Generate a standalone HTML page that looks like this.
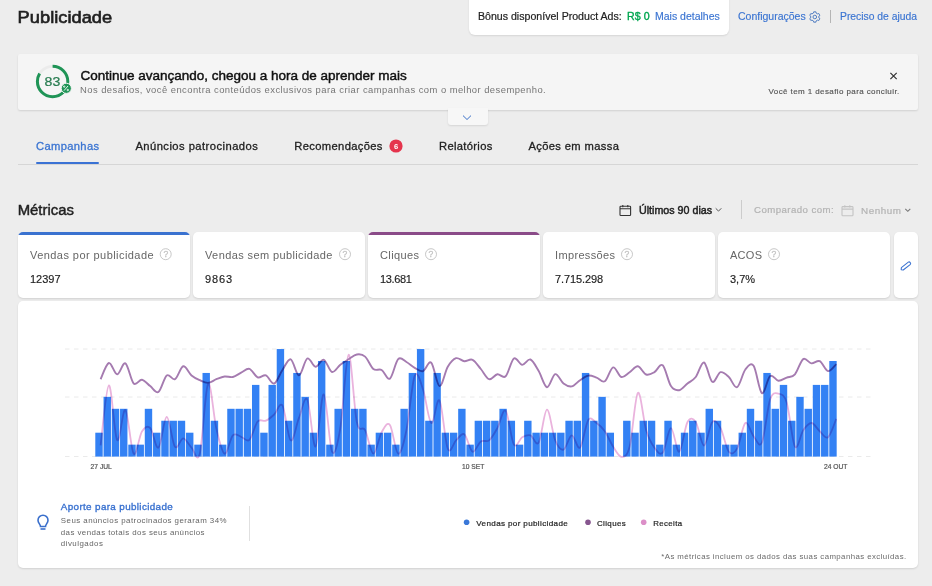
<!DOCTYPE html>
<html><head><meta charset="utf-8">
<style>
*{margin:0;padding:0;box-sizing:border-box}
html,body{width:932px;height:586px;overflow:hidden;background:#ededed;font-family:"Liberation Sans",sans-serif;color:#333}
.a{position:absolute}
.card{position:absolute;top:232px;height:66px;background:#fff;border-radius:5px;box-shadow:0 1px 2px rgba(0,0,0,.12);overflow:hidden}
svg text{font-family:"Liberation Sans",sans-serif}
.sb{stroke:currentColor;stroke-width:0.35px}
</style></head><body>

<!-- boxes -->
<div class="a" style="left:469px;top:-6px;width:260px;height:41px;background:#fff;border-radius:6px;box-shadow:0 1px 2px rgba(0,0,0,.1)"></div>
<div class="a" style="left:18px;top:53.5px;width:900px;height:56.5px;background:#f5f5f5;border-radius:2px;box-shadow:0 1px 2px rgba(0,0,0,.12)"></div>
<div class="a" style="left:448px;top:108px;width:40px;height:17px;background:#f7f7f7;border-radius:0 0 3px 3px;box-shadow:0 1px 2px rgba(0,0,0,.1)"></div>
<div class="a" style="left:36px;top:161.8px;width:63px;height:2.4px;background:#3a72d4;border-radius:1px"></div>
<div class="a" style="left:18px;top:164px;width:900px;height:1px;background:#d6d6d6"></div>
<div class="a" style="left:741px;top:200px;width:1px;height:19px;background:#ccc"></div>
<div class="a" style="left:830px;top:10px;width:1px;height:13px;background:#b5b5b5"></div>

<div class="card" style="left:18px;width:172px"><div style="height:3px;background:#3a72d0"></div></div>
<div class="card" style="left:193px;width:172px"></div>
<div class="card" style="left:368px;width:172px"><div style="height:3px;background:#8a4b88"></div></div>
<div class="card" style="left:543px;width:172px"></div>
<div class="card" style="left:718px;width:172px"></div>
<div class="card" style="left:894px;width:24px"></div>

<div class="a" style="left:18px;top:301px;width:900px;height:267px;background:#fff;border-radius:5px;box-shadow:0 1px 2px rgba(0,0,0,.12)"></div>
<div class="a" style="left:249px;top:506px;width:1px;height:35px;background:#e0e0e0"></div>

<svg class="a" style="left:0;top:0" width="932" height="586" viewBox="0 0 932 586">
<!-- header text -->
<text transform="translate(17.6 23.2) scale(1.13 1)" font-size="16.2" fill="#1f1f1f" stroke="#1f1f1f" stroke-width="0.6">Publicidade</text>
<text x="478" y="20.2" font-size="10.6" fill="#222" stroke="#222" stroke-width="0.2">Bônus disponível Product Ads:</text>
<text x="627" y="20.2" font-size="10.6" fill="#00a650" stroke="#00a650" stroke-width="0.35" letter-spacing="0.1">R$ 0</text>
<text x="655" y="20.2" font-size="10.5" fill="#3a74d2" stroke="#3a74d2" stroke-width="0.15">Mais detalhes</text>
<text x="738" y="20.2" font-size="10.5" fill="#3a74d2" stroke="#3a74d2" stroke-width="0.15">Configurações</text>
<g transform="translate(814.8 17)" fill="none" stroke="#4a78c0" stroke-width="0.95" stroke-linejoin="round">
<circle r="1.8"/>
<path d="M-1.23,-4.02 L-1.10,-5.18 L1.10,-5.18 L1.23,-4.02 L2.86,-3.07 L3.94,-3.55 L5.04,-1.64 L4.09,-0.94 L4.09,0.94 L5.04,1.64 L3.94,3.55 L2.86,3.07 L1.23,4.02 L1.10,5.18 L-1.10,5.18 L-1.23,4.02 L-2.86,3.07 L-3.94,3.55 L-5.04,1.64 L-4.09,0.94 L-4.09,-0.94 L-5.04,-1.64 L-3.94,-3.55 L-2.86,-3.07Z"/>
</g>
<text x="840" y="20.2" font-size="10.35" fill="#3a74d2" stroke="#3a74d2" stroke-width="0.15">Preciso de ajuda</text>

<!-- banner -->
<g>
<circle cx="52.6" cy="81.5" r="15.2" fill="none" stroke="#ebebeb" stroke-width="2.8"/>
<circle cx="52.6" cy="81.5" r="15.2" fill="none" stroke="#1f9456" stroke-width="3" stroke-dasharray="79.5 100" transform="rotate(-90 52.6 81.5)"/>
<text transform="translate(52.4 85.9) scale(1.12 1)" text-anchor="middle" font-size="12.6" fill="#2a7d52" stroke="#2a7d52" stroke-width="0.25">83</text>
<circle cx="66.3" cy="88.3" r="5.1" fill="#1f9456" stroke="#f5f5f5" stroke-width="1"/>
<g stroke="#fff" stroke-width="0.9" fill="none"><path d="M64 90.6L68 86"/><circle cx="64.2" cy="86.6" r="0.7"/><circle cx="67.8" cy="90" r="0.7"/></g>
</g>
<text x="80.4" y="80" font-size="13.5" fill="#111" stroke="#111" stroke-width="0.45">Continue avançando, chegou a hora de aprender mais</text>
<text x="80" y="92.8" font-size="9.42" letter-spacing="0.454" fill="#757575">Nos desafios, você encontra conteúdos exclusivos para criar campanhas com o melhor desempenho.</text>
<path d="M890.4 72.9L896.7 79.2M896.7 72.9L890.4 79.2" stroke="#333" stroke-width="1.2"/>
<text x="768.5" y="93.8" font-size="8.01" letter-spacing="0.403" fill="#555" stroke="#555" stroke-width="0.15">Você tem 1 desafio para concluir.</text>
<path d="M463 115.6L467 119.5L471 115.6" fill="none" stroke="#3a70c8" stroke-width="1"/>

<!-- tabs -->
<g font-size="11.8" fill="#222" stroke="#222" stroke-width="0.3">
<text x="36" y="149.5" fill="#3a74d2" stroke="#3a74d2" font-size="11.2" letter-spacing="0.34">Campanhas</text>
<text x="135.4" y="149.5" font-size="11.2" letter-spacing="0.46">Anúncios patrocinados</text>
<text x="294.3" y="149.5" font-size="11.2" letter-spacing="0.35">Recomendações</text>
<text x="439" y="149.5" font-size="11.2" letter-spacing="0.33">Relatórios</text>
<text x="528.4" y="149.5" font-size="11.2" letter-spacing="0.36">Ações em massa</text>
</g>
<circle cx="396" cy="146" r="6.6" fill="#e5344d"/>
<text x="396" y="148.8" text-anchor="middle" font-size="7.6" fill="#fff" font-weight="bold">6</text>

<!-- metricas header -->
<text x="17.7" y="215" font-size="14.9" fill="#1f1f1f" stroke="#1f1f1f" stroke-width="0.45">Métricas</text>
<g fill="none" stroke="#333" stroke-width="1.1"><rect x="620" y="206.3" width="10.6" height="9.2" rx="0.8"/><path d="M620 208.8H630.6M622.8 205V207.2M627.8 205V207.2"/></g>
<text x="639" y="214" font-size="10.7" fill="#222" stroke="#222" stroke-width="0.45">Últimos 90 dias</text>
<path d="M715.7 208.3L718.5 211.1L721.3 208.3" fill="none" stroke="#555" stroke-width="1"/>
<text x="754" y="213.4" font-size="9.67" letter-spacing="0.433" fill="#b3b3b3" stroke="#b3b3b3" stroke-width="0.2">Comparado com:</text>
<g fill="none" stroke="#c4c4c4" stroke-width="1.1"><rect x="842" y="206.6" width="11" height="9.2" rx="0.8"/><path d="M842 209.1H853M844.8 205.3V207.5M849.8 205.3V207.5"/></g>
<text x="861" y="214" font-size="9.86" letter-spacing="0.567" fill="#b3b3b3" stroke="#b3b3b3" stroke-width="0.2">Nenhum</text>
<path d="M905.3 208.8L907.8 211.3L910.3 208.8" fill="none" stroke="#777" stroke-width="1.1"/>

<!-- cards text -->
<g font-size="11.7" fill="#666">
<text x="30" y="259.3" font-size="11" letter-spacing="0.44">Vendas por publicidade</text>
<text x="205" y="259.3" font-size="11" letter-spacing="0.39">Vendas sem publicidade</text>
<text x="380" y="259.3" font-size="11" letter-spacing="0.38">Cliques</text>
<text x="555" y="259.3" font-size="11" letter-spacing="0.35">Impressões</text>
<text x="730" y="259.3" font-size="11" letter-spacing="0.28">ACOS</text>
</g>
<g fill="none" stroke="#c8c8c8" stroke-width="1">
<circle cx="165.7" cy="254.2" r="5.5"/><circle cx="345" cy="254.2" r="5.5"/><circle cx="431" cy="254.2" r="5.5"/><circle cx="627" cy="254.2" r="5.5"/><circle cx="774" cy="254.2" r="5.5"/>
</g>
<g font-size="8.6" fill="#c4c4c4" stroke="#c4c4c4" stroke-width="0.3" text-anchor="middle">
<text x="166" y="257.3">?</text><text x="345" y="257.3">?</text><text x="431" y="257.3">?</text><text x="627" y="257.3">?</text><text x="774" y="257.3">?</text>
</g>
<g font-size="11" fill="#222" stroke="#222" stroke-width="0.15">
<text x="30" y="283.1">12397</text>
<text x="205" y="283.1" letter-spacing="0.9">9863</text>
<text x="380" y="283.1" letter-spacing="-0.35">13.681</text>
<text x="555" y="283.1" letter-spacing="-0.1">7.715.298</text>
<text x="730" y="283.1">3,7%</text>
</g>
<path d="M-5.6,0 L-4.2,-1.5 L4.6,-1.5 Q5.9,-1.5 5.9,0 Q5.9,1.5 4.6,1.5 L-4.2,1.5 Z" transform="translate(905.6 266.2) rotate(-38)" fill="none" stroke="#3a72d0" stroke-width="1.05" stroke-linejoin="round"/>

<!-- chart -->
<g stroke="#eaeaea" stroke-width="1" stroke-dasharray="4.5 4.5">
<path d="M65 349H871M65 397H871M65 456.5H871"/>
</g>
<g fill="#3381f4">
<rect x="95.30" y="432.70" width="7.4" height="23.90"/>
<rect x="103.55" y="396.85" width="7.4" height="59.75"/>
<rect x="111.79" y="408.80" width="7.4" height="47.80"/>
<rect x="120.04" y="408.80" width="7.4" height="47.80"/>
<rect x="128.29" y="444.65" width="7.4" height="11.95"/>
<rect x="136.53" y="444.65" width="7.4" height="11.95"/>
<rect x="144.78" y="408.80" width="7.4" height="47.80"/>
<rect x="153.03" y="432.70" width="7.4" height="23.90"/>
<rect x="161.28" y="420.75" width="7.4" height="35.85"/>
<rect x="169.52" y="420.75" width="7.4" height="35.85"/>
<rect x="177.77" y="420.75" width="7.4" height="35.85"/>
<rect x="186.02" y="432.70" width="7.4" height="23.90"/>
<rect x="194.26" y="444.65" width="7.4" height="11.95"/>
<rect x="202.51" y="372.95" width="7.4" height="83.65"/>
<rect x="210.76" y="420.75" width="7.4" height="35.85"/>
<rect x="219.00" y="444.65" width="7.4" height="11.95"/>
<rect x="227.25" y="408.80" width="7.4" height="47.80"/>
<rect x="235.50" y="408.80" width="7.4" height="47.80"/>
<rect x="243.75" y="408.80" width="7.4" height="47.80"/>
<rect x="251.99" y="384.90" width="7.4" height="71.70"/>
<rect x="260.24" y="432.70" width="7.4" height="23.90"/>
<rect x="268.49" y="384.90" width="7.4" height="71.70"/>
<rect x="276.73" y="349.05" width="7.4" height="107.55"/>
<rect x="284.98" y="420.75" width="7.4" height="35.85"/>
<rect x="293.23" y="372.95" width="7.4" height="83.65"/>
<rect x="301.48" y="396.85" width="7.4" height="59.75"/>
<rect x="309.72" y="432.70" width="7.4" height="23.90"/>
<rect x="317.97" y="361.00" width="7.4" height="95.60"/>
<rect x="326.22" y="444.65" width="7.4" height="11.95"/>
<rect x="334.46" y="408.80" width="7.4" height="47.80"/>
<rect x="342.71" y="361.00" width="7.4" height="95.60"/>
<rect x="350.96" y="408.80" width="7.4" height="47.80"/>
<rect x="359.20" y="408.80" width="7.4" height="47.80"/>
<rect x="367.45" y="444.65" width="7.4" height="11.95"/>
<rect x="375.70" y="432.70" width="7.4" height="23.90"/>
<rect x="383.94" y="432.70" width="7.4" height="23.90"/>
<rect x="392.19" y="444.65" width="7.4" height="11.95"/>
<rect x="400.44" y="408.80" width="7.4" height="47.80"/>
<rect x="408.69" y="372.95" width="7.4" height="83.65"/>
<rect x="416.93" y="349.05" width="7.4" height="107.55"/>
<rect x="425.18" y="420.75" width="7.4" height="35.85"/>
<rect x="433.43" y="372.95" width="7.4" height="83.65"/>
<rect x="441.67" y="432.70" width="7.4" height="23.90"/>
<rect x="449.92" y="432.70" width="7.4" height="23.90"/>
<rect x="458.17" y="408.80" width="7.4" height="47.80"/>
<rect x="466.42" y="444.65" width="7.4" height="11.95"/>
<rect x="474.66" y="420.75" width="7.4" height="35.85"/>
<rect x="482.91" y="420.75" width="7.4" height="35.85"/>
<rect x="491.16" y="420.75" width="7.4" height="35.85"/>
<rect x="499.40" y="408.80" width="7.4" height="47.80"/>
<rect x="507.65" y="420.75" width="7.4" height="35.85"/>
<rect x="515.90" y="444.65" width="7.4" height="11.95"/>
<rect x="524.14" y="420.75" width="7.4" height="35.85"/>
<rect x="532.39" y="432.70" width="7.4" height="23.90"/>
<rect x="540.64" y="432.70" width="7.4" height="23.90"/>
<rect x="548.88" y="432.70" width="7.4" height="23.90"/>
<rect x="557.13" y="432.70" width="7.4" height="23.90"/>
<rect x="565.38" y="420.75" width="7.4" height="35.85"/>
<rect x="573.63" y="420.75" width="7.4" height="35.85"/>
<rect x="581.87" y="372.95" width="7.4" height="83.65"/>
<rect x="590.12" y="420.75" width="7.4" height="35.85"/>
<rect x="598.37" y="396.85" width="7.4" height="59.75"/>
<rect x="606.61" y="432.70" width="7.4" height="23.90"/>
<rect x="623.11" y="420.75" width="7.4" height="35.85"/>
<rect x="631.35" y="432.70" width="7.4" height="23.90"/>
<rect x="639.60" y="420.75" width="7.4" height="35.85"/>
<rect x="647.85" y="420.75" width="7.4" height="35.85"/>
<rect x="656.10" y="444.65" width="7.4" height="11.95"/>
<rect x="664.34" y="420.75" width="7.4" height="35.85"/>
<rect x="672.59" y="444.65" width="7.4" height="11.95"/>
<rect x="680.84" y="432.70" width="7.4" height="23.90"/>
<rect x="689.08" y="420.75" width="7.4" height="35.85"/>
<rect x="697.33" y="432.70" width="7.4" height="23.90"/>
<rect x="705.58" y="408.80" width="7.4" height="47.80"/>
<rect x="713.82" y="420.75" width="7.4" height="35.85"/>
<rect x="722.07" y="444.65" width="7.4" height="11.95"/>
<rect x="730.32" y="444.65" width="7.4" height="11.95"/>
<rect x="738.57" y="432.70" width="7.4" height="23.90"/>
<rect x="746.81" y="408.80" width="7.4" height="47.80"/>
<rect x="755.06" y="420.75" width="7.4" height="35.85"/>
<rect x="763.31" y="372.95" width="7.4" height="83.65"/>
<rect x="771.55" y="408.80" width="7.4" height="47.80"/>
<rect x="779.80" y="384.90" width="7.4" height="71.70"/>
<rect x="788.05" y="420.75" width="7.4" height="35.85"/>
<rect x="796.29" y="396.85" width="7.4" height="59.75"/>
<rect x="804.54" y="408.80" width="7.4" height="47.80"/>
<rect x="812.79" y="384.90" width="7.4" height="71.70"/>
<rect x="821.04" y="384.90" width="7.4" height="71.70"/>
<rect x="829.28" y="361.00" width="7.4" height="95.60"/>
</g>
<g style="mix-blend-mode:multiply" fill="none" stroke-width="2">
<path d="M100.60,445.30 C101.98,435.32 106.11,386.28 108.87,385.40 C111.62,384.52 114.38,435.90 117.13,440.00 C119.89,444.10 122.64,407.72 125.40,410.00 C128.15,412.28 130.91,450.13 133.66,453.70 C136.42,457.27 139.17,435.68 141.93,431.40 C144.69,427.12 147.44,425.30 150.20,428.00 C152.95,430.70 155.71,449.45 158.46,447.60 C161.22,445.75 163.97,417.03 166.73,416.90 C169.48,416.77 172.24,443.22 174.99,446.80 C177.75,450.38 180.50,438.27 183.26,438.40 C186.02,438.53 188.77,445.05 191.53,447.60 C194.28,450.15 197.04,464.33 199.79,453.70 C202.55,443.07 205.30,388.02 208.06,383.80 C210.81,379.58 213.57,416.75 216.32,428.40 C219.08,440.05 221.83,452.55 224.59,453.70 C227.35,454.85 230.10,438.12 232.86,435.30 C235.61,432.48 238.37,436.03 241.12,436.80 C243.88,437.57 246.63,442.45 249.39,439.90 C252.14,437.35 254.90,424.70 257.65,421.50 C260.41,418.30 263.16,421.87 265.92,420.70 C268.68,419.53 271.43,417.02 274.19,414.50 C276.94,411.98 279.70,401.28 282.45,405.60 C285.21,409.92 287.96,438.35 290.72,440.40 C293.47,442.45 296.23,424.73 298.98,417.90 C301.74,411.07 304.49,394.62 307.25,399.40 C310.01,404.18 312.76,447.45 315.52,446.60 C318.27,445.75 321.03,393.45 323.78,394.30 C326.54,395.15 329.29,446.07 332.05,451.70 C334.80,457.33 337.56,444.25 340.31,428.10 C343.07,411.95 345.82,355.82 348.58,354.80 C351.34,353.78 354.09,409.43 356.85,422.00 C359.60,434.57 362.36,424.92 365.11,430.20 C367.87,435.48 370.62,453.37 373.38,453.70 C376.13,454.03 378.89,436.98 381.64,432.20 C384.40,427.42 387.15,421.42 389.91,425.00 C392.67,428.58 395.42,452.83 398.18,453.70 C400.93,454.57 403.69,443.17 406.44,430.20 C409.20,417.23 411.95,382.73 414.71,375.90 C417.46,369.07 420.22,381.35 422.97,389.20 C425.73,397.05 428.48,421.12 431.24,423.00 C434.00,424.88 436.75,396.23 439.51,400.50 C442.26,404.77 445.02,441.95 447.77,448.60 C450.53,455.25 453.28,442.78 456.04,440.40 C458.79,438.02 461.55,432.42 464.30,434.30 C467.06,436.18 469.81,450.52 472.57,451.70 C475.33,452.88 478.08,443.28 480.84,441.40 C483.59,439.52 486.35,442.62 489.10,440.40 C491.86,438.18 494.61,433.05 497.37,428.10 C500.12,423.15 502.88,407.97 505.63,410.70 C508.39,413.43 511.14,440.07 513.90,444.50 C516.66,448.93 519.41,438.83 522.17,437.30 C524.92,435.77 527.68,434.43 530.43,435.30 C533.19,436.17 535.94,446.77 538.70,442.50 C541.45,438.23 544.21,410.05 546.96,409.70 C549.72,409.35 552.47,433.75 555.23,440.40 C557.99,447.05 560.74,450.45 563.50,449.60 C566.25,448.75 569.01,435.63 571.76,435.30 C574.52,434.97 577.27,450.17 580.03,447.60 C582.78,445.03 585.54,424.00 588.29,419.90 C591.05,415.80 593.80,421.12 596.56,423.00 C599.32,424.88 602.07,427.27 604.83,431.20 C607.58,435.13 610.34,442.33 613.09,446.60 C615.85,450.87 618.60,456.80 621.36,456.80 C624.11,456.80 626.87,457.25 629.62,446.60 C632.38,435.95 635.13,395.63 637.89,392.90 C640.65,390.17 643.40,421.08 646.16,430.20 C648.91,439.32 651.67,443.85 654.42,447.60 C657.18,451.35 659.93,455.95 662.69,452.70 C665.44,449.45 668.20,428.27 670.95,428.10 C673.71,427.93 676.46,452.72 679.22,451.70 C681.98,450.68 684.73,426.95 687.49,422.00 C690.24,417.05 693.00,418.08 695.75,422.00 C698.51,425.92 701.26,445.50 704.02,445.50 C706.77,445.50 709.53,424.90 712.28,422.00 C715.04,419.10 717.79,423.15 720.55,428.10 C723.31,433.05 726.06,448.28 728.82,451.70 C731.57,455.12 734.33,453.38 737.08,448.60 C739.84,443.82 742.59,425.05 745.35,423.00 C748.10,420.95 750.86,433.05 753.61,436.30 C756.37,439.55 759.12,448.65 761.88,442.50 C764.64,436.35 767.39,407.53 770.15,399.40 C772.90,391.27 775.66,393.18 778.41,393.70 C781.17,394.22 783.92,393.68 786.68,402.50 C789.43,411.32 792.19,441.98 794.94,446.60 C797.70,451.22 800.45,434.13 803.21,430.20 C805.97,426.27 808.72,422.83 811.48,423.00 C814.23,423.17 816.99,428.82 819.74,431.20 C822.50,433.58 825.25,439.35 828.01,437.30 C830.76,435.25 834.90,421.97 836.27,418.90" stroke="#eab3dd" stroke-width="1.8"/>
<path d="M100.60,379.20 C101.98,376.50 106.11,363.82 108.87,363.00 C111.62,362.18 114.38,374.23 117.13,374.30 C119.89,374.37 122.64,361.87 125.40,363.40 C128.15,364.93 130.91,380.78 133.66,383.50 C136.42,386.22 139.17,379.27 141.93,379.70 C144.69,380.13 147.44,384.05 150.20,386.10 C152.95,388.15 155.71,393.78 158.46,392.00 C161.22,390.22 163.97,377.53 166.73,375.40 C169.48,373.27 172.24,380.72 174.99,379.20 C177.75,377.68 180.50,366.93 183.26,366.30 C186.02,365.67 188.77,373.08 191.53,375.40 C194.28,377.72 197.04,378.95 199.79,380.20 C202.55,381.45 205.30,383.07 208.06,382.90 C210.81,382.73 213.57,380.27 216.32,379.20 C219.08,378.13 221.83,376.87 224.59,376.50 C227.35,376.13 230.10,377.63 232.86,377.00 C235.61,376.37 238.37,374.07 241.12,372.70 C243.88,371.33 246.63,368.03 249.39,368.80 C252.14,369.57 254.90,376.20 257.65,377.30 C260.41,378.40 263.16,374.37 265.92,375.40 C268.68,376.43 271.43,384.40 274.19,383.50 C276.94,382.60 279.70,374.03 282.45,370.00 C285.21,365.97 287.96,358.40 290.72,359.30 C293.47,360.20 296.23,375.53 298.98,375.40 C301.74,375.27 304.49,359.93 307.25,358.50 C310.01,357.07 312.76,366.58 315.52,366.80 C318.27,367.02 321.03,358.93 323.78,359.80 C326.54,360.67 329.29,371.18 332.05,372.00 C334.80,372.82 337.56,366.82 340.31,364.70 C343.07,362.58 345.82,361.00 348.58,359.30 C351.34,357.60 354.09,354.95 356.85,354.50 C359.60,354.05 362.36,354.18 365.11,356.60 C367.87,359.02 370.62,366.77 373.38,369.00 C376.13,371.23 378.89,368.40 381.64,370.00 C384.40,371.60 387.15,380.42 389.91,378.60 C392.67,376.78 395.42,361.87 398.18,359.10 C400.93,356.33 403.69,360.53 406.44,362.00 C409.20,363.47 411.95,366.38 414.71,367.90 C417.46,369.42 420.22,371.97 422.97,371.10 C425.73,370.23 428.48,360.20 431.24,362.70 C434.00,365.20 436.75,385.42 439.51,386.10 C442.26,386.78 445.02,371.45 447.77,366.80 C450.53,362.15 453.28,359.13 456.04,358.20 C458.79,357.27 461.55,360.93 464.30,361.20 C467.06,361.47 469.81,358.50 472.57,359.80 C475.33,361.10 478.08,365.77 480.84,369.00 C483.59,372.23 486.35,378.32 489.10,379.20 C491.86,380.08 494.61,374.78 497.37,374.30 C500.12,373.82 502.88,378.93 505.63,376.30 C508.39,373.67 511.14,360.40 513.90,358.50 C516.66,356.60 519.41,364.73 522.17,364.90 C524.92,365.07 527.68,358.47 530.43,359.50 C533.19,360.53 535.94,366.48 538.70,371.10 C541.45,375.72 544.21,386.70 546.96,387.20 C549.72,387.70 552.47,374.72 555.23,374.10 C557.99,373.48 560.74,381.45 563.50,383.50 C566.25,385.55 569.01,386.95 571.76,386.40 C574.52,385.85 577.27,382.00 580.03,380.20 C582.78,378.40 585.54,376.03 588.29,375.60 C591.05,375.17 593.80,376.65 596.56,377.60 C599.32,378.55 602.07,383.00 604.83,381.30 C607.58,379.60 610.34,368.12 613.09,367.40 C615.85,366.68 618.60,376.20 621.36,377.00 C624.11,377.80 626.87,373.98 629.62,372.20 C632.38,370.42 635.13,365.92 637.89,366.30 C640.65,366.68 643.40,373.52 646.16,374.50 C648.91,375.48 651.67,373.73 654.42,372.20 C657.18,370.67 659.93,362.98 662.69,365.30 C665.44,367.62 668.20,381.95 670.95,386.10 C673.71,390.25 676.46,390.63 679.22,390.20 C681.98,389.77 684.73,385.70 687.49,383.50 C690.24,381.30 693.00,380.50 695.75,377.00 C698.51,373.50 701.26,361.70 704.02,362.50 C706.77,363.30 709.53,380.18 712.28,381.80 C715.04,383.42 717.79,373.00 720.55,372.20 C723.31,371.40 726.06,374.50 728.82,377.00 C731.57,379.50 734.33,388.45 737.08,387.20 C739.84,385.95 742.59,373.07 745.35,369.50 C748.10,365.93 750.86,361.87 753.61,365.80 C756.37,369.73 759.12,391.40 761.88,393.10 C764.64,394.80 767.39,378.05 770.15,376.00 C772.90,373.95 775.66,380.53 778.41,380.80 C781.17,381.07 783.92,378.68 786.68,377.60 C789.43,376.52 792.19,377.38 794.94,374.30 C797.70,371.22 800.45,360.92 803.21,359.10 C805.97,357.28 808.72,363.05 811.48,363.40 C814.23,363.75 816.99,359.92 819.74,361.20 C822.50,362.48 825.25,370.62 828.01,371.10 C830.76,371.58 834.90,365.27 836.27,364.10" stroke="#a57bb0" stroke-width="1.9"/>
</g>
<g font-size="6.7" fill="#555" stroke="#555" stroke-width="0.2">
<text x="90.6" y="469">27 JUL</text>
<text x="462" y="469">10 SET</text>
<text x="824" y="469">24 OUT</text>
</g>

<!-- footer -->
<g fill="none" stroke="#3a6fcc" stroke-width="1.6"><path d="M40.5 526.5C40.5 524.5 38 523 38 520.2A5 5 0 0 1 48 520.2C48 523 45.5 524.5 45.5 526.5Z"/><path d="M40.5 529H45.5"/></g>
<text x="60.8" y="510" font-size="9.86" letter-spacing="0.36" fill="#3a72d0" stroke="#3a72d0" stroke-width="0.35">Aporte para publicidade</text>
<g font-size="8.8" fill="#666">
<text x="60.8" y="523" font-size="7.92" letter-spacing="0.454">Seus anúncios patrocinados geraram 34%</text>
<text x="60.8" y="534.6" font-size="7.92" letter-spacing="0.428">das vendas totais dos seus anúncios</text>
<text x="60.8" y="545.6" font-size="7.92" letter-spacing="0.473">divulgados</text>
</g>
<circle cx="466.6" cy="522.2" r="2.8" fill="#3a78d8"/>
<circle cx="588" cy="522.2" r="2.8" fill="#87568f"/>
<circle cx="643.7" cy="522.2" r="2.8" fill="#dc8fc8"/>
<g font-size="8.8" fill="#222" stroke="#222" stroke-width="0.2">
<text x="476.3" y="526" font-size="8.1" letter-spacing="0.348">Vendas por publicidade</text>
<text x="597" y="526" font-size="7.91" letter-spacing="0.382">Cliques</text>
<text x="653.3" y="526" font-size="7.82" letter-spacing="0.389">Receita</text>
</g>
<text x="661.3" y="558.9" font-size="7.83" letter-spacing="0.418" fill="#6a6a6a">*As métricas incluem os dados das suas campanhas excluídas.</text>
</svg>
</body></html>
